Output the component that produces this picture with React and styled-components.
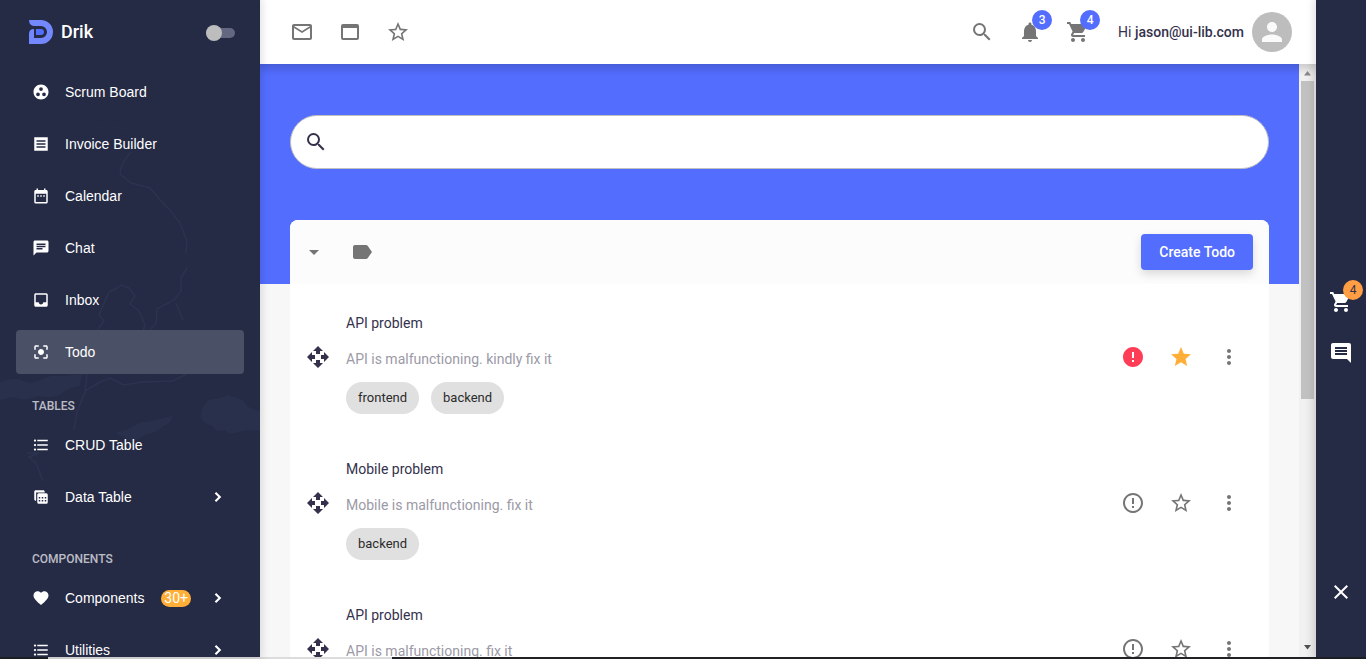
import { useState } from "react";
import styled, { createGlobalStyle } from "styled-components";
import {
  MdArrowDropDown,
  MdCenterFocusStrong,
  MdChat,
  MdClose,
  MdComment,
  MdDateRange,
  MdError,
  MdErrorOutline,
  MdFavorite,
  MdFormatListBulleted,
  MdGroupWork,
  MdInbox,
  MdLabel,
  MdMailOutline,
  MdMoreVert,
  MdNotifications,
  MdPerson,
  MdSearch,
  MdShoppingCart,
  MdStar,
  MdStarOutline,
  MdWebAsset,
} from "react-icons/md";

const GlobalStyle = createGlobalStyle`
  * {
    box-sizing: border-box;
  }
  body {
    margin: 0;
    background-color: #f7f7f7;
    color: #34314c;
    font-family: Roboto, "Liberation Sans", sans-serif;
    font-size: 14px;
  }
  button {
    border: 0;
    padding: 0;
    background: none;
    color: inherit;
    font: inherit;
    cursor: pointer;
  }
  a {
    color: inherit;
    text-decoration: none;
  }
`;

const Layout = styled.div`
  display: flex;
  flex-direction: column;
  height: 100vh;
  overflow: hidden;
`;

const Columns = styled.div`
  display: flex;
  flex: 1;
  min-height: 0;
`;

const Sidebar = styled.aside`
  position: relative;
  display: flex;
  flex-direction: column;
  flex-shrink: 0;
  width: 260px;
  overflow: hidden;
  background-color: #252a45;
  color: white;
  z-index: 3;
  box-shadow: 0 0 8px 2px rgba(0, 0, 0, 0.12);
`;

const MapArt = styled.svg`
  position: absolute;
  top: 0;
  left: 0;
  width: 260px;
  height: 657px;
`;

const Brand = styled.div`
  position: relative;
  display: flex;
  align-items: center;
  flex-shrink: 0;
  height: 64px;
  padding: 0 25px 0 28px;

  h1 {
    flex: 1;
    margin: 0 0 0 8px;
    font-size: 18px;
    font-weight: 500;
    line-height: 24px;
  }
`;

const Switch = styled.input`
  appearance: none;
  display: flex;
  align-items: center;
  width: 29px;
  height: 10px;
  margin: 2px 0 0;
  border-radius: 5px;
  background-color: #636780;
  cursor: pointer;

  &::before {
    content: "";
    width: 16px;
    height: 16px;
    border-radius: 50%;
    background-color: #bdbdbd;
  }
  &:checked {
    justify-content: flex-end;
  }
`;

const Nav = styled.nav`
  position: relative;
  display: flex;
  flex-direction: column;
  gap: 8px;
  padding: 6px 16px;
`;

const NavItem = styled.a`
  display: flex;
  align-items: center;
  height: 44px;
  flex-shrink: 0;
  padding: 0 17px 0 16px;
  border-radius: 4px;
  background-color: ${(props) => (props.$active ? "#4a5065" : "transparent")};
  font-family: "Liberation Sans", sans-serif;
  line-height: 20px;

  &:hover {
    background-color: #4a5065;
  }
  svg {
    font-size: 18px;
  }
`;

const NavName = styled.span`
  flex: 1;
  margin-left: 15px;
`;

const NavBadge = styled.span`
  height: 17px;
  margin-right: 18px;
  padding: 0 3px;
  border-radius: 9px;
  background-color: #ffaf38;
  font-family: Roboto, sans-serif;
  line-height: 17px;
`;

const NavLabel = styled.p`
  margin: ${(props) => (props.$spaced ? "18px" : "10px")} 0 0;
  padding: 5px 16px 0;
  color: rgba(255, 255, 255, 0.7);
  font-size: 12px;
  font-weight: 500;
  line-height: 18px;
`;

const Main = styled.main`
  display: flex;
  flex-direction: column;
  flex: 1;
  min-width: 0;
`;

const Topbar = styled.header`
  display: flex;
  align-items: center;
  justify-content: space-between;
  flex-shrink: 0;
  height: 64px;
  padding: 0 24px 0 18px;
  background-color: white;
  box-shadow: 0 2px 8px 3px rgba(0, 0, 0, 0.16);
  z-index: 2;
`;

const Group = styled.div`
  display: flex;
  align-items: center;
`;

const IconButton = styled.button`
  position: relative;
  display: flex;
  align-items: center;
  justify-content: center;
  width: 48px;
  height: 48px;
  color: ${(props) => props.$color || "#757575"};
  font-size: 24px;
`;

const Count = styled.span`
  position: absolute;
  top: 2px;
  right: 2px;
  width: 20px;
  height: 20px;
  border-radius: 50%;
  background-color: ${(props) => (props.$warn ? "#ff9e43" : "#536dfe")};
  color: ${(props) => (props.$warn ? "#34314c" : "white")};
  font-size: 12px;
  font-weight: ${(props) => (props.$warn ? 400 : 500)};
  line-height: 20px;
  text-align: center;
`;

const User = styled.button`
  display: flex;
  align-items: center;
  margin-left: 16px;
  font-size: 14px;

  strong {
    font-weight: 500;
  }
`;

const Avatar = styled.span`
  display: flex;
  align-items: center;
  justify-content: center;
  width: 40px;
  height: 40px;
  margin-left: 8px;
  border-radius: 50%;
  background-color: #bdbdbd;
  color: #fafafa;
  font-size: 30px;
`;

const Content = styled.div`
  display: flex;
  flex: 1;
  min-height: 0;
`;

const Page = styled.div`
  flex: 1;
  min-width: 0;
  overflow: hidden;
  background: linear-gradient(#536dfe 220px, #f7f7f7 220px);
  padding: 51px 30px 0;
`;

const SearchBox = styled.label`
  display: flex;
  align-items: center;
  height: 54px;
  padding: 0 13px;
  border: 1px solid #c0c0c0;
  border-radius: 27px;
  background-color: white;
  font-size: 24px;

  input {
    flex: 1;
    min-width: 0;
    margin-left: 10px;
    border: 0;
    outline: 0;
    background: none;
    font: 16px Roboto, sans-serif;
  }
`;

const Card = styled.section`
  margin-top: 51px;
  border-radius: 8px;
  background-color: white;
`;

const CardHead = styled.div`
  display: flex;
  align-items: center;
  justify-content: space-between;
  height: 64px;
  padding: 0 16px 0 0;
  border-radius: 8px 8px 0 0;
  background-color: #fcfcfc;
`;

const CreateButton = styled.button`
  height: 36px;
  padding: 0 18px;
  border-radius: 4px;
  background-color: #536dfe;
  color: white;
  font-weight: 500;
  box-shadow: 0 4px 10px rgba(0, 0, 0, 0.14);
`;

const TodoRow = styled.article`
  display: flex;
  align-items: center;
  height: 146px;
  padding: 0 16px;
`;

const TodoText = styled.div`
  flex: 1;
  margin-left: 16px;

  h2 {
    margin: 12px 0 16px;
    font-size: 14px;
    font-weight: 400;
    line-height: 20px;
  }
  p {
    margin: 0 0 13px;
    color: #9b9aa6;
    line-height: 20px;
  }
`;

const Tags = styled.div`
  display: flex;
  gap: 12px;
`;

const Tag = styled.span`
  height: 32px;
  padding: 0 12px;
  border-radius: 16px;
  background-color: #e0e0e0;
  color: #2b2b2b;
  font-size: 13px;
  line-height: 31px;
`;

const Handle = styled.button`
  display: flex;
  font-size: 24px;
`;

const Scrollbar = styled.div`
  display: flex;
  flex-direction: column;
  align-items: center;
  justify-content: space-between;
  width: 17px;
  padding: 7px 0;
  background: linear-gradient(90deg, #f1f1f1 30%, #e7e7e7);
`;

const Thumb = styled.div`
  width: 13px;
  height: 318px;
  margin: 5px 0 auto;
  background-color: #c1c1c1;
`;

const Arrow = styled.svg`
  width: 7px;
  height: 5px;
  fill: ${(props) => props.$color};
`;

const Rail = styled.aside`
  display: flex;
  flex-direction: column;
  align-items: center;
  gap: 3px;
  flex-shrink: 0;
  width: 50px;
  padding: 278px 0 41px;
  background-color: #252a45;
  z-index: 3;
  box-shadow: 0 0 8px 2px rgba(0, 0, 0, 0.12);
`;

const RailEnd = styled.div`
  margin-top: auto;
`;

const BottomEdge = styled.div`
  flex-shrink: 0;
  height: 2px;
  background: linear-gradient(
    90deg,
    #202124 48px,
    #dcdcdc 48px,
    #dcdcdc 392px,
    #202124 392px
  );
`;

function Icon({ path }) {
  return (
    <svg
      width="1em"
      height="1em"
      viewBox="0 0 24 24"
      fill="currentColor"
      fillRule="evenodd"
    >
      <path d={path} />
    </svg>
  );
}

function ReceiptIcon() {
  return (
    <Icon path="M3 3h18v18H3zM6 7v2h12V7zM6 11v2h12v-2zM6 15v2h12v-2z" />
  );
}

// two stacked sheets, the front one with a grid
function TableIcon() {
  return (
    <Icon path="M9 7h10a2 2 0 0 1 2 2v10a2 2 0 0 1-2 2H9a2 2 0 0 1-2-2V9a2 2 0 0 1 2-2zm0 5v2h2v-2zm4 0v2h2v-2zm4 0v2h2v-2zm-8 4v2h2v-2zm4 0v2h2v-2zm4 0v2h2v-2zM6 17H5c-1.100 0-2-.9-2-2V5c0-1.100.9-2 2-2h10c1.100 0 2 .9 2 2v1H5.500V17z" />
  );
}

function ExpandIcon() {
  return <Icon path="M9.600 5.200L7.600 7.200 12.400 12l-4.800 4.800 2 2L16.400 12z" />;
}

function MoveIcon() {
  return (
    <Icon path="M10 9h4V6h3l-5-5-5 5h3zm-1 1H6V7l-5 5 5 5v-3h3zm14 2l-5-5v3h-3v4h3v3zm-9 3h-4v3H7l5 5 5-5h-3z" />
  );
}

function Logo() {
  return (
    <svg width="25" height="24" viewBox="0 0 25 24">
      <path
        fill="#7388ff"
        d="M1 0h12a12 12 0 0 1 0 24H1V14q0-5 5-5v9h7a6 6 0 0 0 0-12H7Q1 6 1 0z"
      />
      <path fill="#536dfe" d="M8 9h5a3 3 0 0 1 0 6H8z" />
    </svg>
  );
}

const mainLinks = [
  { name: "Scrum Board", icon: MdGroupWork },
  { name: "Invoice Builder", icon: ReceiptIcon },
  { name: "Calendar", icon: MdDateRange },
  { name: "Chat", icon: MdChat },
  { name: "Inbox", icon: MdInbox },
  { name: "Todo", icon: MdCenterFocusStrong, active: true },
];

const tableLinks = [
  { name: "CRUD Table", icon: MdFormatListBulleted },
  { name: "Data Table", icon: TableIcon, nested: true },
];

const componentLinks = [
  { name: "Components", icon: MdFavorite, badge: "30+", nested: true },
  { name: "Utilities", icon: MdFormatListBulleted, nested: true },
];

const initialTodos = [
  {
    id: 1,
    title: "API problem",
    note: "API is malfunctioning. kindly fix it",
    tags: ["frontend", "backend"],
    important: true,
    starred: true,
  },
  {
    id: 2,
    title: "Mobile problem",
    note: "Mobile is malfunctioning. fix it",
    tags: ["backend"],
  },
  {
    id: 3,
    title: "API problem",
    note: "API is malfunctioning. fix it",
    tags: ["frontend"],
  },
];

function NavLinks({ links }) {
  return links.map(({ name, icon: LinkIcon, active, badge, nested }) => (
    <NavItem key={name} href={`#${name}`} $active={active}>
      <LinkIcon />
      <NavName>{name}</NavName>
      {badge && <NavBadge>{badge}</NavBadge>}
      {nested && <ExpandIcon />}
    </NavItem>
  ));
}

function Todo({ todo, onToggle }) {
  return (
    <TodoRow>
      <Handle aria-label="Move">
        <MoveIcon />
      </Handle>
      <TodoText>
        <h2>{todo.title}</h2>
        <p>{todo.note}</p>
        <Tags>
          {todo.tags.map((tag) => (
            <Tag key={tag}>{tag}</Tag>
          ))}
        </Tags>
      </TodoText>
      <IconButton
        aria-label="Important"
        $color={todo.important && "#ff3d57"}
        onClick={() => onToggle(todo.id, "important")}
      >
        {todo.important ? <MdError /> : <MdErrorOutline />}
      </IconButton>
      <IconButton
        aria-label="Star"
        $color={todo.starred && "#ffaf38"}
        onClick={() => onToggle(todo.id, "starred")}
      >
        {todo.starred ? <MdStar /> : <MdStarOutline />}
      </IconButton>
      <IconButton aria-label="More">
        <MdMoreVert />
      </IconButton>
    </TodoRow>
  );
}

export default function App() {
  const [todos, setTodos] = useState(initialTodos);
  const [query, setQuery] = useState("");

  const toggle = (id, key) =>
    setTodos(todos.map((t) => (t.id === id ? { ...t, [key]: !t[key] } : t)));

  const visible = todos.filter((t) =>
    t.title.toLowerCase().includes(query.toLowerCase())
  );

  return (
    <Layout>
      <GlobalStyle />
      <Columns>
        <Sidebar>
          <MapArt
            viewBox="0 0 260 657"
            fill="none"
            stroke="#2b3350"
            strokeWidth="1.5"
          >
            <path
              strokeDasharray="1 2"
              d="M78 135q8-8 28-8t28 6l3 12"
              strokeWidth="1"
            />
            <path d="M131 152q-11 12-11 22l11 9 19 5 12 14 8 8 10 13 7 18-1 12" />
            <path d="M187 268l-6 10v13l-7 9-17 9-1 15-6 5M176 303l7 17M98 329l6-8-5-6 10-23 8-4 4-3 8 3 6 8-5 8 9 7 6 14-5 16" />
            <path d="M87 374l-2 18-8 20-3 18M85 391l15-9 11-4 12 7 20-3 30-1 15-8M27 453h12l-10 4 7 6 7 18" />
            <g fill="#28304b" stroke="none">
              <path d="M201 412q4-14 14-13l14-4 14 5q4 9 17 11v20q-12-2-22 1-8 4-14-2-8 4-12-4-13-3-11-14z" />
              <path d="M0 382q10-4 20-3 8 6 18 2 12-7 24-5l20-2-2 12q-12 2-20 9-10 4-22 1-14 6-24 1L0 400z" />
              <path d="M115 433q8-2 18-6 6-6 14-5l25-6q0 8-9 10-8 8-16 8-8 6-16 7z" />
            </g>
          </MapArt>
          <Brand>
            <Logo />
            <h1>Drik</h1>
            <Switch type="checkbox" aria-label="Compact menu" />
          </Brand>
          <Nav>
            <NavLinks links={mainLinks} />
            <NavLabel>TABLES</NavLabel>
            <NavLinks links={tableLinks} />
            <NavLabel $spaced>COMPONENTS</NavLabel>
            <NavLinks links={componentLinks} />
          </Nav>
        </Sidebar>
        <Main>
          <Topbar>
            <Group>
              <IconButton aria-label="Mail">
                <MdMailOutline />
              </IconButton>
              <IconButton aria-label="Windows">
                <MdWebAsset />
              </IconButton>
              <IconButton aria-label="Favourites">
                <MdStarOutline />
              </IconButton>
            </Group>
            <Group>
              <IconButton aria-label="Search">
                <MdSearch />
              </IconButton>
              <IconButton aria-label="Notifications">
                <MdNotifications />
                <Count>3</Count>
              </IconButton>
              <IconButton aria-label="Cart">
                <MdShoppingCart />
                <Count>4</Count>
              </IconButton>
              <User>
                <span>
                  Hi <strong>jason@ui-lib.com</strong>
                </span>
                <Avatar>
                  <MdPerson />
                </Avatar>
              </User>
            </Group>
          </Topbar>
          <Content>
            <Page>
              <SearchBox>
                <MdSearch />
                <input
                  type="text"
                  aria-label="Search todos"
                  value={query}
                  onChange={(e) => setQuery(e.target.value)}
                />
              </SearchBox>
              <Card>
                <CardHead>
                  <Group>
                    <IconButton aria-label="Filter">
                      <MdArrowDropDown />
                    </IconButton>
                    <IconButton aria-label="Labels">
                      <MdLabel />
                    </IconButton>
                  </Group>
                  <CreateButton>Create Todo</CreateButton>
                </CardHead>
                {visible.map((todo) => (
                  <Todo key={todo.id} todo={todo} onToggle={toggle} />
                ))}
              </Card>
            </Page>
            <Scrollbar>
              <Arrow viewBox="0 0 7 5" $color="#8b8b8b">
                <path d="M0 4.500L3.500 0 7 4.500z" />
              </Arrow>
              <Thumb />
              <Arrow viewBox="0 0 7 5" $color="#505050">
                <path d="M0 0h7L3.500 4.500z" />
              </Arrow>
            </Scrollbar>
          </Content>
        </Main>
        <Rail>
          <IconButton aria-label="Cart" $color="white">
            <MdShoppingCart />
            <Count $warn>4</Count>
          </IconButton>
          <IconButton aria-label="Messages" $color="white">
            <MdComment />
          </IconButton>
          <RailEnd>
            <IconButton aria-label="Close" $color="white">
              <MdClose />
            </IconButton>
          </RailEnd>
        </Rail>
      </Columns>
      <BottomEdge />
    </Layout>
  );
}
